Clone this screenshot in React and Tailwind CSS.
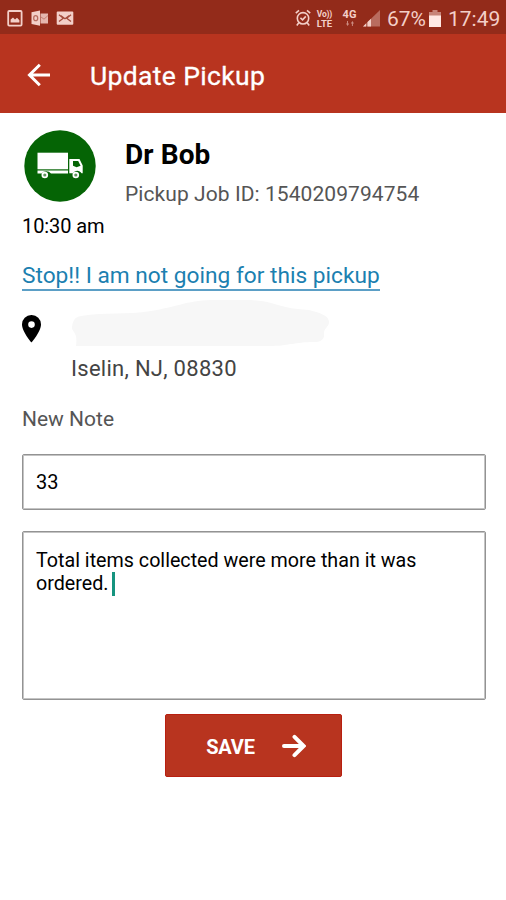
import React, { useState } from 'react'


const StatusBar = () => (
    <div className='h-[34px] bg-[#932b1a] flex items-center justify-between pl-[7px] pr-[5px] text-[#f3cfc8]'>
        <svg className='w-[68px] h-[18px] mt-[2px]' viewBox='0 0 68 18' fill='none'>
            {/* gallery */}
            <rect x='1.2' y='2' width='13.4' height='14.6' rx='1' stroke='currentColor' strokeWidth='1.8' />
            <path d='M3.6 13.4v-3l2.4-2 2 2 2-1.6 2.4 2.4v2.2z' fill='currentColor' />
            {/* outlook */}
            <path d='M24.5 3.2l8.5-1.8v15.4l-8.5-1.8z' fill='currentColor' />
            <path d='M33.5 4.5h7.5v10h-7.5z' fill='currentColor' opacity='.85' />
            <path d='M34 8l3 2.2 4-3.7' stroke='#c0786b' strokeWidth='.9' />
            <ellipse cx='28.7' cy='9.2' rx='2' ry='2.5' stroke='#b86e61' strokeWidth='1.3' />
            {/* mail */}
            <rect x='49.7' y='2.5' width='16.6' height='13.2' rx='1' fill='currentColor' />
            <path d='M52 5.8l4.3 3.4L52 12.6M64 5.8l-4.3 3.4 4.3 3.4M54 6.8l4 2.9 4-2.9' stroke='#a34a3a' strokeWidth='1.3' />
        </svg>
        <div className='flex items-center'>
            <svg className='w-[16px] h-[18px] mt-[2px]' viewBox='0 0 16 18' fill='none' stroke='currentColor' strokeWidth='1.6'>
                <circle cx='8' cy='9.3' r='5.7' />
                <path d='M.8 4.2L4 1.3M15.2 4.2L12 1.3M3.8 13.8l-2 2.7M12.2 13.8l2 2.7M5.4 8.8l2.2 2 3.2-3.4' />
            </svg>
            <div className='ml-[5px] mt-[3px] w-[17px] text-[9.5px] leading-[9px] font-bold text-center'>
                <p className='text-[8.5px] tracking-tight'>Vo))</p>
                <p>LTE</p>
            </div>
            <div className='ml-[9px] mt-[2px] w-[15px] text-center font-bold'>
                <p className='text-[11px] leading-[10px]'>4G</p>
                <svg className='mx-auto mt-[1px] w-[8px] h-[5px] opacity-60' viewBox='0 0 10 6' fill='currentColor'>
                    <path d='M0 3h1.3V0h1.2v3H4L2 6zM6 3l2-3 2 3H8.6v3H7.4V3z' />
                </svg>
            </div>
            <svg className='ml-[6px] mt-[2px] w-[18px] h-[18px]' viewBox='0 0 18 18' fill='currentColor'>
                <path d='M0 17.5L17 1v16.5z' opacity='.4' />
                <path d='M0 17.5l3-2.9v2.9zM4.5 17.5v-4.6L8 9.8v7.7z' />
            </svg>
            <span className='ml-[6px] mt-[3px] text-[21px] leading-6 w-[40px] tracking-[-0.1px]'>67%</span>
            <svg className='ml-[2px] mt-[2px] w-[12px] h-[17px]' viewBox='0 0 12 17' fill='currentColor'>
                <path d='M3.5 0h5v2H12v4H0V2h3.5z' opacity='.55' />
                <path d='M0 5.5h12V17H0z' fill='#ffe9e4' />
            </svg>
            <span className='ml-[7px] mt-[3px] text-[21px] leading-6 w-[53px]'>17:49</span>
        </div>
    </div>
)

const TruckIcon = () => (
    <svg className='size-[72px]' viewBox='0 0 72 72'>
        <circle cx='36' cy='36' r='35.7' fill='#056405' />
        <g fill='#fff'>
            <path d='M13.5 22.7h30.5v16.6H13.5z' />
            <path d='M13.5 40.4h30.5v3.2H27a6 6 0 0 0-9.5 0h-4z' />
            <path d='M45.3 29h10.2l3.2 6.5v7.7h-1.2a5 5 0 0 0-8.5 0h-3.7z' />
            <circle cx='20.8' cy='45' r='3.3' />
            <circle cx='51.8' cy='45' r='3.3' />
        </g>
        <path d='M49 31h5.2l2.4 4.7-4 1.6-3.6-1.6z' fill='#056405' />
        <circle cx='20.8' cy='45' r='1.6' fill='#5d965d' />
        <circle cx='51.8' cy='45' r='1.6' fill='#5d965d' />
    </svg>
)

export default function App() {

    const [items, setItems] = useState('33')

    return (
        <div className="w-[506px] h-[900px] overflow-hidden bg-white text-black font-['Roboto',sans-serif]">
            <StatusBar />
            <div className='h-[79px] bg-[#b8341f] flex items-center pl-[27px] text-white'>
                <svg className='w-[24px] h-[24px] mt-[2px]' viewBox='0 0 24 24' fill='none' stroke='currentColor' strokeWidth='3'>
                    <path d='M23 12H2.5M12.8 1.8L2.5 12l10.3 10.2' />
                </svg>
                <h1 className='ml-[39px] mt-[4px] text-[26.5px] leading-8 tracking-[0.35px] [-webkit-text-stroke:0.3px_white]'>Update Pickup</h1>
            </div>

            <div className='px-[22px]'>
                <div className='flex h-[128px] pt-[17px]'>
                    <div className='w-[103px] shrink-0'>
                        <div className='pl-[2px]'><TruckIcon /></div>
                        <p className='mt-[12px] text-[20px] leading-6 tracking-[-0.1px]'>10:30 am</p>
                    </div>
                    <div className='pt-[9px]'>
                        <h2 className='text-[28px] leading-8 font-bold tracking-[0.1px]'>Dr Bob</h2>
                        <p className='mt-[9px] text-[21px] leading-7 tracking-[0.07px] text-[#555] whitespace-nowrap'>Pickup Job ID: 1540209794754</p>
                    </div>
                </div>

                <a href='#' className='mt-[20px] block w-[358px] h-[30px] border-b-2 border-[#5b9fc6] text-[22.7px] leading-[30px] text-[#1b80b0] whitespace-nowrap'>
                    Stop!! I am not going for this pickup
                </a>

                <div className='flex mt-[9px] h-[85px]'>
                    <svg className='w-[19px] h-[28px] mt-[15px] shrink-0' viewBox='0 0 19 28'>
                        <path fillRule='evenodd' d='M9.5 0A9.4 9.4 0 0 0 0 9.5C0 16.5 9.5 27.5 9.5 27.5S19 16.5 19 9.5A9.4 9.4 0 0 0 9.5 0zm0 6.3a3.3 3.3 0 1 1 0 6.6 3.3 3.3 0 0 1 0-6.6z' />
                    </svg>
                    <div className='ml-[30px]'>
                        {/* street line is hidden */}
                        <svg className='w-[260px] h-[48px]' viewBox='0 0 260 48' fill='#f7f7f7'>
                            <path d='M1 27c1-7 3-10 9-11 25-4 45-1 70-5 25-4 35-10 60-11 20-1 45-1 60 3 15 4 20 6 38 7 12 3 20 6 20 12 0 5-5 6-5 11 1 7-4 9-10 9-20 0-25 4-45 4H5c1-8 0-11-2-14s-2-3-2-5z' />
                        </svg>
                        <p className='mt-[7px] text-[22px] leading-7 tracking-[0.28px] text-[#444]'>Iselin, NJ, 08830</p>
                    </div>
                </div>

                <p className='mt-[20px] text-[21px] leading-7 text-[#555]'>New Note</p>

                <input
                    className='mt-[21px] block w-[464px] h-[56px] border border-[#939393] shadow-[inset_0_0_0_1px_#c4c4c4] rounded-[2px] px-[13px] text-[20px] outline-none'
                    value={items}
                    onChange={(e) => setItems(e.target.value)}
                />
                <div className='mt-[21px] w-[464px] h-[169px] border border-[#939393] shadow-[inset_0_0_0_1px_#c4c4c4] rounded-[2px] px-[13px] pt-[17px] text-[19.7px] leading-[23px]'>
                    <p>Total items collected were more than it was</p>
                    <p className='flex items-center h-[23px]'>ordered.
                        <span className='ml-[4px] w-[3px] h-[24px] bg-[#16947f]' />
                    </p>
                </div>

                <button className='mt-[14px] ml-[143px] w-[177px] h-[63px] flex items-center bg-[#b8341f] border border-[#b81f10] rounded-[2px] pl-[40px] text-white'>
                    <span className='mt-[2px] w-[49px] text-[20px] font-bold tracking-[-0.2px]'>SAVE</span>
                    <svg className='ml-[27px] w-[24px] h-[24px]' viewBox='0 0 24 24' fill='none' stroke='currentColor' strokeWidth='4' strokeLinecap='round'>
                        <path d='M2 12h19M12.5 2.8L21.7 12l-9.2 9.2' />
                    </svg>
                </button>
            </div>
        </div>
    )
}
